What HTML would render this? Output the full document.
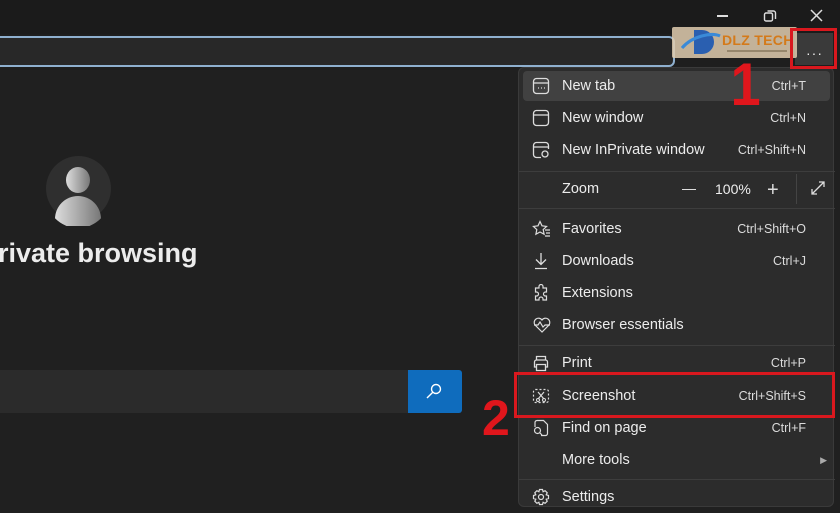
<!DOCTYPE html>
<html><head><meta charset="utf-8"><style>
*{margin:0;padding:0;box-sizing:border-box}
body{width:840px;height:500px;overflow:hidden;background:#202020;font-family:"Liberation Sans",sans-serif;position:relative;color:#e6e6e6}
.top{position:absolute;left:0;top:0;width:840px;height:34px;background:#1b1b1b}
.addr{position:absolute;left:-10px;top:36px;width:685px;height:31px;border:2px solid #8fb0cf;border-radius:6px;background:#282828}
.bar{position:absolute;left:0;top:34px;width:840px;height:36px;background:#1e1e1e}
.menu{position:absolute;left:518px;top:67px;width:316px;height:440px;background:#2c2c2c;border:1px solid #3a3a3a;border-radius:6px}
.it{position:absolute;left:0;width:316px;height:32px;font-size:14.5px;color:#ececec}
.it .l{position:absolute;left:43px;top:8px}
.it .r{position:absolute;right:29px;top:9px;font-size:12.5px;color:#dcdcdc}
.it svg{position:absolute;left:13px;top:7px}
.sep{position:absolute;left:0;width:316px;height:1px;background:#3d3d3d}
.red{position:absolute;border:3px solid #d9181e;z-index:5}
.num{position:absolute;color:#e0161c;font-weight:bold;font-family:"Liberation Sans",sans-serif;z-index:6}
</style></head><body>
<div class="top"></div>
<div class="bar"></div>
<div class="addr"></div>
<div style="position:absolute;left:717px;top:15px;width:11px;height:1.5px;background:#ddd"></div>
<svg style="position:absolute;left:763px;top:9px" width="14" height="14" viewBox="0 0 14 14"><rect x="1.5" y="4" width="8" height="8" rx="1.5" fill="none" stroke="#ddd" stroke-width="1.4"/><path d="M4.5 2h6a2 2 0 0 1 2 2v6" fill="none" stroke="#ddd" stroke-width="1.4"/></svg>
<svg style="position:absolute;left:810px;top:9px" width="13" height="13" viewBox="0 0 13 13"><path d="M1 1L12 12M12 1L1 12" stroke="#ddd" stroke-width="1.5"/></svg>
<div style="position:absolute;left:795px;top:33px;width:38px;height:32px;background:#3a3a3a"></div>
<div style="position:absolute;left:806px;top:45px;font-size:14px;color:#eee;letter-spacing:1px">···</div>

<div class="menu">
<div style="position:absolute;left:4px;top:3px;width:307px;height:30px;background:#414141;border-radius:4px"></div>
<div class="it" style="top:2px"><svg width="18" height="18" viewBox="0 0 18 18"><rect x="1.5" y="1.5" width="15" height="15" rx="3" fill="none" stroke="#ddd" stroke-width="1.3"/><path d="M1.5 6h15" stroke="#ddd" stroke-width="1.3"/><path d="M6 11h1M9 11h1M12 11h1" stroke="#ddd" stroke-width="1.3"/></svg><span class="l">New tab</span><span class="r">Ctrl+T</span></div>
<div class="it" style="top:34px"><svg width="18" height="18" viewBox="0 0 18 18"><rect x="1.5" y="1.5" width="15" height="15" rx="3" fill="none" stroke="#ddd" stroke-width="1.3"/><path d="M1.5 6h15" stroke="#ddd" stroke-width="1.3"/></svg><span class="l">New window</span><span class="r">Ctrl+N</span></div>
<div class="it" style="top:66px"><svg width="18" height="18" viewBox="0 0 18 18"><path d="M9 16.5H4.5a3 3 0 0 1-3-3v-9a3 3 0 0 1 3-3h9a3 3 0 0 1 3 3V8M1.5 6h15" fill="none" stroke="#ddd" stroke-width="1.3"/><circle cx="13" cy="13" r="3" fill="none" stroke="#ddd" stroke-width="1.3"/></svg><span class="l">New InPrivate window</span><span class="r">Ctrl+Shift+N</span></div>
<div class="sep" style="top:103px"></div>
<div class="it" style="top:105px"><span class="l">Zoom</span></div>
<div style="position:absolute;left:163px;top:121px;width:14px;height:1.3px;background:#ddd"></div>
<div style="position:absolute;left:196px;top:113px;font-size:14px;color:#eee">100%</div>
<div style="position:absolute;left:248px;top:114px;font-size:20px;line-height:16px;color:#ddd">+</div>
<div style="position:absolute;left:277px;top:106px;width:1px;height:30px;background:#444"></div>
<svg style="position:absolute;left:291px;top:112px" width="16" height="16" viewBox="0 0 16 16"><path d="M2 14L14 2M9 2h5v5M2 9v5h5" fill="none" stroke="#ddd" stroke-width="1.3"/></svg>
<div class="sep" style="top:140px"></div>
<div class="it" style="top:145px"><svg width="20" height="18" viewBox="0 0 20 18"><path d="M8 1.5l2 4.3 4.6.6-3.4 3.2.9 4.6L8 12l-4.1 2.2.9-4.6L1.4 6.4 6 5.8z" fill="none" stroke="#ddd" stroke-width="1.2"/><path d="M13 10h5M14 13h4M13 16h5" stroke="#ddd" stroke-width="1.2"/></svg><span class="l">Favorites</span><span class="r">Ctrl+Shift+O</span></div>
<div class="it" style="top:177px"><svg width="18" height="18" viewBox="0 0 18 18"><path d="M9 1v11M4 7.5l5 5 5-5M3 16.5h12" fill="none" stroke="#ddd" stroke-width="1.3"/></svg><span class="l">Downloads</span><span class="r">Ctrl+J</span></div>
<div class="it" style="top:209px"><svg width="18" height="18" viewBox="0 0 18 18"><path d="M7 2.5a2 2 0 0 1 4 0V4h3.5v4h-1a2 2 0 0 0 0 4h1v4H11v-1a2 2 0 0 0-4 0v1H3.5v-4h1a2 2 0 0 0 0-4h-1V4H7z" fill="none" stroke="#ddd" stroke-width="1.2"/></svg><span class="l">Extensions</span></div>
<div class="it" style="top:241px"><svg width="20" height="18" viewBox="0 0 20 18"><path d="M10 16L3 9a4 4 0 0 1 7-5 4 4 0 0 1 7 5z" fill="none" stroke="#ddd" stroke-width="1.2"/><path d="M2 9h4l2-3 3 5 2-2h5" fill="none" stroke="#ddd" stroke-width="1.2"/></svg><span class="l">Browser essentials</span></div>
<div class="sep" style="top:277px"></div>
<div class="it" style="top:279px"><svg width="18" height="18" viewBox="0 0 18 18"><path d="M4.5 6V2.5h9V6M4.5 13H2.5V8a2 2 0 0 1 2-2h9a2 2 0 0 1 2 2v5h-2M4.5 10.5h9v6h-9z" fill="none" stroke="#ddd" stroke-width="1.3"/></svg><span class="l">Print</span><span class="r">Ctrl+P</span></div>
<div class="it" style="top:312px"><svg width="18" height="18" viewBox="0 0 18 18"><rect x="1.5" y="2.5" width="15" height="13" rx="2" fill="none" stroke="#ddd" stroke-width="1.2" stroke-dasharray="2 2"/><path d="M6 5l6 7M12 5l-6 7" stroke="#ddd" stroke-width="1.2"/><circle cx="6" cy="13" r="1.5" fill="none" stroke="#ddd"/><circle cx="12" cy="13" r="1.5" fill="none" stroke="#ddd"/></svg><span class="l">Screenshot</span><span class="r">Ctrl+Shift+S</span></div>
<div class="it" style="top:344px"><svg width="18" height="18" viewBox="0 0 18 18"><path d="M8 1.5h3.5l4 4v9a2 2 0 0 1-2 2H9M3 8V3.5a2 2 0 0 1 2-2h3" fill="none" stroke="#ddd" stroke-width="1.2"/><circle cx="5.5" cy="11.5" r="3" fill="none" stroke="#ddd" stroke-width="1.2"/><path d="M7.5 13.5l2.5 2.5" stroke="#ddd" stroke-width="1.2"/></svg><span class="l">Find on page</span><span class="r">Ctrl+F</span></div>
<div class="it" style="top:376px"><span class="l">More tools</span><span class="r" style="right:8px;font-size:9px;top:11px;color:#aaa">▶</span></div>
<div class="sep" style="top:411px"></div>
<div class="it" style="top:413px"><svg width="18" height="18" viewBox="0 0 18 18"><circle cx="9" cy="9" r="2.5" fill="none" stroke="#ddd" stroke-width="1.2"/><path d="M7.5 1.5h3l.6 2.2 2-1 2.1 2.1-1 2 2.3.7v3l-2.3.7 1 2-2.1 2.1-2-1-.6 2.2h-3l-.6-2.2-2 1-2.1-2.1 1-2-2.3-.7v-3l2.3-.7-1-2 2.1-2.1 2 1z" fill="none" stroke="#ddd" stroke-width="1.2"/></svg><span class="l">Settings</span></div>
</div>

<div style="position:absolute;left:672px;top:27px;width:125px;height:31px;background:rgba(225,205,175,0.85);border-radius:2px;z-index:4"></div>
<svg style="position:absolute;left:680px;top:26px;z-index:4" width="42" height="34" viewBox="0 0 42 34"><path d="M14 4h8a12 12 0 0 1 0 24h-8z" fill="#2a5fb0"/><path d="M2 22C12 10 32 6 40 10" fill="none" stroke="#3a8ad8" stroke-width="3"/></svg>
<div style="position:absolute;left:722px;top:32px;font-size:14px;font-weight:bold;color:#d47a1a;letter-spacing:0.3px;z-index:4">DLZ TECH</div>
<div style="position:absolute;left:727px;top:50px;width:60px;height:2px;background:#6a5a40;opacity:.5;z-index:4"></div>
<div class="red" style="left:790px;top:28px;width:47px;height:41px"></div>
<div class="num" style="left:729px;top:55px;font-size:60px;line-height:60px;transform:scaleX(0.9)">1</div>

<div style="position:absolute;left:46px;top:156px;width:65px;height:65px;border-radius:50%;background:#2f2f2f"></div>
<div style="position:absolute;left:66px;top:167px;width:24px;height:26px;border-radius:50%;background:linear-gradient(90deg,#ddd,#777)"></div>
<div style="position:absolute;left:55px;top:196px;width:46px;height:30px;border-radius:23px 23px 0 0;background:linear-gradient(90deg,#ddd,#777);clip-path:circle(32px at 23px 0px)"></div>
<div style="position:absolute;left:-2px;top:238px;font-size:27px;color:#ececec;font-weight:bold">rivate browsing</div>
<div style="position:absolute;left:0;top:370px;width:408px;height:43px;background:#2b2b2b"></div>
<div style="position:absolute;left:408px;top:370px;width:54px;height:43px;background:#0f6cbd;border-radius:0 3px 3px 0"></div>
<svg style="position:absolute;left:425px;top:382px" width="18" height="18" viewBox="0 0 18 18"><circle cx="11" cy="7" r="4.5" fill="none" stroke="#fff" stroke-width="1.4"/><path d="M7.8 10.2L2 16" stroke="#fff" stroke-width="1.4"/></svg>

<div class="red" style="left:514px;top:372px;width:321px;height:46px"></div>
<div class="num" style="left:482px;top:393px;font-size:50px;line-height:50px">2</div>
</body></html>
